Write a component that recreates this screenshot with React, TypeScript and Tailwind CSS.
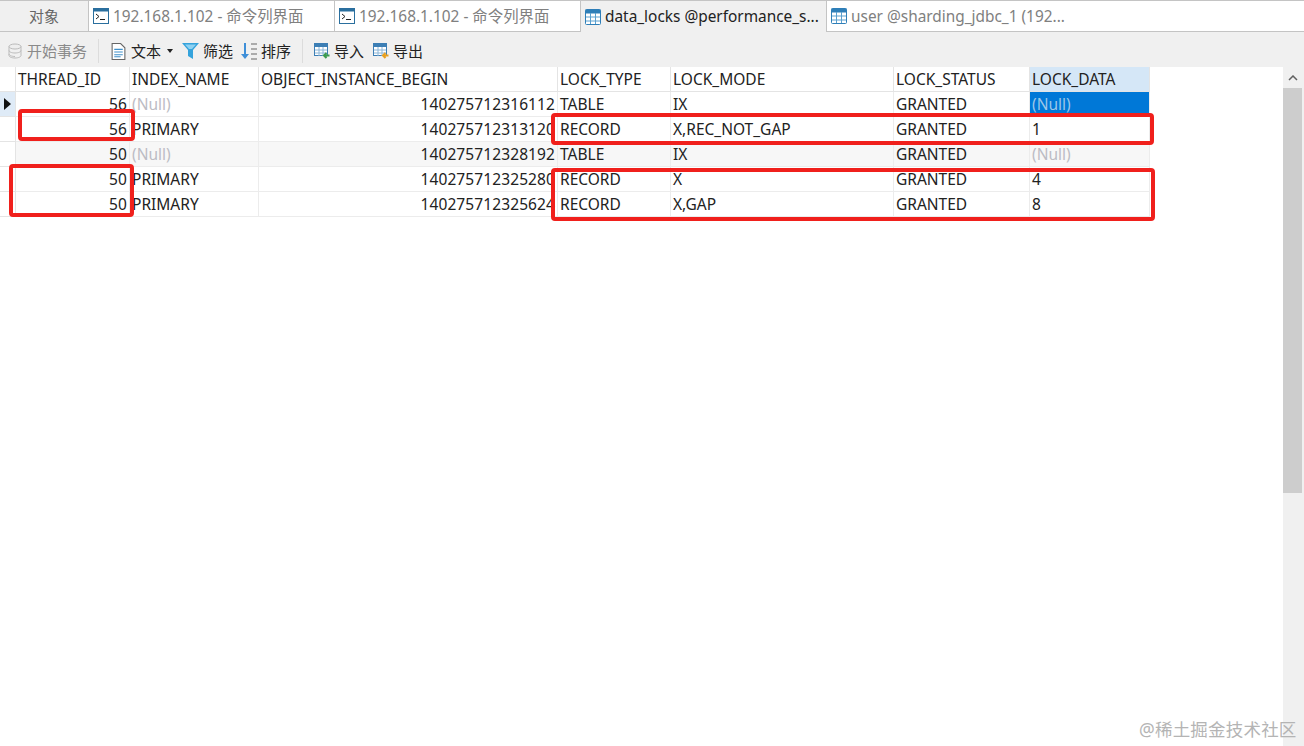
const COLS = ["THREAD_ID", "INDEX_NAME", "OBJECT_INSTANCE_BEGIN", "LOCK_TYPE", "LOCK_MODE", "LOCK_STATUS", "LOCK_DATA"];

const ROWS = [
  ["56", null, "140275712316112", "TABLE", "IX", "GRANTED", null],
  ["56", "PRIMARY", "140275712313120", "RECORD", "X,REC_NOT_GAP", "GRANTED", "1"],
  ["50", null, "140275712328192", "TABLE", "IX", "GRANTED", null],
  ["50", "PRIMARY", "140275712325280", "RECORD", "X", "GRANTED", "4"],
  ["50", "PRIMARY", "140275712325624", "RECORD", "X,GAP", "GRANTED", "8"],
];

const TableIcon = () => (
  <svg width="16" height="16" viewBox="0 0 16 16" className="shrink-0">
    <rect x="0.5" y="0.5" width="15" height="15" rx="1" fill="#fff" stroke="#2f7fb8" />
    <rect x="0.5" y="0.5" width="15" height="4" fill="#2f7fb8" />
    <path d="M5.5 4v11M10.5 4v11M1 8h14M1 12h14" stroke="#5aa0cf" fill="none" />
  </svg>
);

const ConsoleIcon = () => (
  <svg width="16" height="16" viewBox="0 0 16 16" className="shrink-0">
    <rect x="0.5" y="0.5" width="15" height="15" fill="#fff" stroke="#2a6f9e" />
    <rect x="0.5" y="0.5" width="15" height="3" fill="#2a6f9e" />
    <path d="M3 6l3 2.5L3 11" stroke="#222" fill="none" />
    <path d="M7 11.5h5" stroke="#222" fill="none" />
  </svg>
);

const Tab = ({ icon, label, tone }: { icon: React.ReactNode; label: string; tone: string }) => (
  <div className={`flex w-[246px] items-center gap-[4px] border-r border-[#c4c4c4] pl-[4px] text-[15.400px] whitespace-nowrap ${tone}`}>
    {icon}
    <span className="pt-[1px]">{label}</span>
  </div>
);

const ImportIcon = ({ arrow }: { arrow: string }) => (
  <svg width="16" height="16" viewBox="0 0 16 16" className="shrink-0">
    <rect x="0.5" y="0.5" width="13" height="12" fill="#fff" stroke="#3d7fb5" />
    <rect x="0.5" y="0.5" width="13" height="3.500" fill="#3d7fb5" />
    <path d="M5 4v9M9 4v9M1 7h12M1 10h12" stroke="#8cb6d8" fill="none" />
    <path d="M15.500 12.500H10M12.500 10l-2.500 2.500 2.500 2.500" stroke={arrow} strokeWidth="2" fill="none" />
  </svg>
);

const Tool = ({ icon, label, muted }: { icon: React.ReactNode; label: string; muted?: boolean }) => (
  <div className={`flex items-center gap-[4px] ${muted ? "text-[#8a8a8a]" : "text-[#222]"}`}>
    {icon}
    <span>{label}</span>
  </div>
);

const Divider = () => <div className="mx-[2px] h-[24px] w-px bg-[#dcdcdc]" />;

const Mark = ({ className }: { className: string }) => (
  <div className={`pointer-events-none absolute rounded-[4px] border-4 border-[#f0201c] ${className}`} />
);

export default function App() {
  return (
    <div className="relative flex h-[746px] w-[1304px] flex-col overflow-hidden bg-white font-['Noto_Sans','Noto_Sans_CJK_SC',sans-serif] text-[#222]">
      <div className="flex h-[32px] border-t border-b border-t-[#c4c4c4] border-b-[#c4c4c4] bg-white">
        <div className="flex w-[89px] items-center justify-center border-r border-[#c4c4c4] bg-[#f0f0f0] pt-[1px] text-[15px] text-[#666]">对象</div>
        <Tab icon={<ConsoleIcon />} label="192.168.1.102 - 命令列界面" tone="text-[#808080]" />
        <Tab icon={<ConsoleIcon />} label="192.168.1.102 - 命令列界面" tone="text-[#808080]" />
        <div className="-mb-px flex w-[246px] items-center gap-[4px] border-r border-[#c4c4c4] bg-[#f0f0f0] pl-[4px] text-[15.400px] whitespace-nowrap text-[#222]">
          <TableIcon />
          <span className="pt-[1px]">data_locks @performance_s...</span>
        </div>
        <div className="flex w-[246px] items-center gap-[4px] pl-[4px] text-[15.400px] whitespace-nowrap text-[#808080]">
          <TableIcon />
          <span className="pt-[1px]">user @sharding_jdbc_1 (192...</span>
        </div>
      </div>

      <div className="flex h-[35px] items-center gap-[9px] bg-[#f0f0f0] pt-[3px] pl-[8px] text-[15px]">
        <Tool
          muted
          label="开始事务"
          icon={
            <svg width="15" height="16" viewBox="0 0 15 16">
              <ellipse cx="7" cy="3.500" rx="6" ry="2.500" fill="#eee" stroke="#bbb" />
              <path d="M1 3.500v9c0 1.400 2.700 2.500 6 2.500s6-1.100 6-2.500v-9M1 7.500c0 1.400 2.700 2.500 6 2.500s6-1.100 6-2.500M1 11c0 1.400 2.700 2.500 6 2.500" fill="none" stroke="#bbb" />
            </svg>
          }
        />
        <Divider />
        <div className="ml-[1px] flex items-center gap-[6px]">
          <div className="flex items-center gap-[5px]">
            <svg width="15" height="17" viewBox="0 0 14 16">
              <path d="M1 .5h8l4 4v11H1z" fill="#fff" stroke="#666" />
              <path d="M3 6h8M3 8.500h8M3 11h8M3 13h6" stroke="#3f8fc9" fill="none" />
            </svg>
            <span>文本</span>
          </div>
          <svg width="6" height="4" viewBox="0 0 6 4">
            <path d="M0 0h6L3 4z" fill="#222" />
          </svg>
        </div>
        <Tool
          label="筛选"
          icon={
            <svg width="17" height="16" viewBox="0 0 17 16">
              <path d="M0 0h17l-6 7v9l-5-3V7z" fill="#35a3dc" />
              <path d="M3 1.500h11l-4 4.500H7z" fill="#8fd2f2" />
            </svg>
          }
        />
        <div className="-ml-[1px]">
          <Tool
            label="排序"
            icon={
              <svg width="16" height="17" viewBox="0 0 16 17">
                <path d="M4 0v13" stroke="#3f8fd8" strokeWidth="2" fill="none" />
                <path d="M0 11h8l-4 5z" fill="#3f8fd8" />
                <path d="M10 1h6M10 6h6M10 11h6M10 16h6" stroke="#666" fill="none" />
              </svg>
            }
          />
        </div>
        <Divider />
        <Tool label="导入" icon={<ImportIcon arrow="#3d9b4f" />} />
        <Tool label="导出" icon={<ImportIcon arrow="#e8a020" />} />
      </div>

      <div className="flex min-h-0 flex-1">
        <div className="min-w-0 flex-1 text-[15.500px] leading-[24px]">
          <div className="grid w-[1150px] grid-cols-[16px_114px_129px_299px_113px_223px_136px_120px] text-[#222]">
            <div className="h-[25px] border-r border-b border-[#e4e4e4]" />
            {COLS.map((c) => (
              <div
                key={c}
                className={`h-[25px] border-r border-b border-[#e4e4e4] pl-[2px] ${c === "LOCK_DATA" ? "bg-[#d5e7f7]" : ""}`}
              >
                {c}
              </div>
            ))}
            {ROWS.map((row, i) => {
              const shade = i === 2 ? "bg-[#f7f7f7]" : "";
              return [
                <div key={`h${i}`} className={`flex h-[25px] items-center justify-center border-r border-b border-[#e4e4e4] ${i === 0 ? "bg-[#dfebf7]" : ""}`}>
                  {i === 0 && (
                    <svg width="7" height="12" viewBox="0 0 7 12">
                      <path d="M0 0l7 6-7 6z" fill="#111" />
                    </svg>
                  )}
                </div>,
                ...row.map((cell, j) => {
                  const selected = i === 0 && j === 6;
                  const right = j === 0 || j === 2;
                  return (
                    <div
                      key={`${i}-${j}`}
                      className={`h-[25px] overflow-hidden border-r border-b border-[#ececec] whitespace-nowrap ${right ? "pr-[2px] text-right tracking-[0.1px]" : "pl-[2px]"} ${selected ? "bg-[#0078d7]" : shade} ${cell === null ? (selected ? "text-[#9cc6e8]" : "text-[#bcbcc4]") : ""}`}
                    >
                      {cell === null ? "(Null)" : cell}
                    </div>
                  );
                }),
              ];
            })}
          </div>
        </div>

        <div className="flex w-[21px] flex-col bg-[#f0f0f0]">
          <div className="flex h-[21px] items-center justify-center pr-[2px]">
            <svg width="10" height="6" viewBox="0 0 10 6">
              <path d="M1 5l4-4 4 4" stroke="#606060" strokeWidth="1.500" fill="none" />
            </svg>
          </div>
          <div className="h-[405px] w-[19px] bg-[#cdcdcd]" />
        </div>
      </div>

      <Mark className="top-[109px] left-[18px] h-[32px] w-[117px]" />
      <Mark className="top-[164px] left-[9px] h-[53px] w-[125px]" />
      <Mark className="top-[113px] left-[551px] h-[32px] w-[603px]" />
      <Mark className="top-[168px] left-[551px] h-[53px] w-[604px]" />

      <div className="absolute top-[717px] left-[1139px] text-[17.500px] leading-[24px] tracking-[0.2px] text-[#b4b4b4]">@稀土掘金技术社区</div>
    </div>
  );
}
